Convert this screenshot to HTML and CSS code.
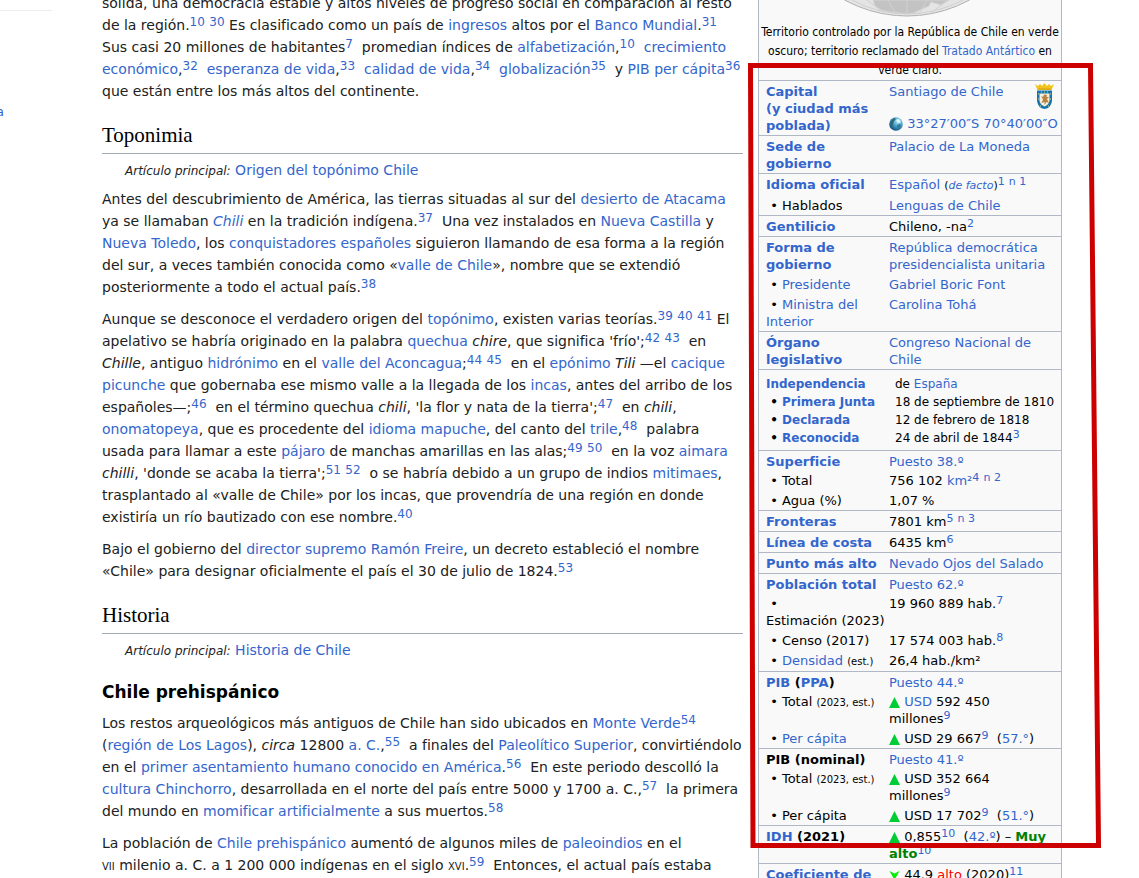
FILE: index.html
```html
<!DOCTYPE html>
<html lang="es">
<head>
<meta charset="utf-8">
<title>Chile</title>
<link rel="stylesheet" href="styles.css">
</head>
<body>
<svg class="defs" aria-hidden="true">
  <symbol id="up" viewBox="0 0 11 11"><path d="M5.500 0 11 11H0z" fill="#00cc33"/></symbol>
  <symbol id="down" viewBox="0 0 11 11"><path d="M0.500 1 5.500 3.500 10.500 1 5.500 10z" fill="#00f000"/></symbol>
</svg>
<div class="page">
  <aside class="sidebar">
    <nav class="portal"><a href="#">a</a></nav>
  </aside>
  <main class="content">
    <article class="article">
      <p>sólida, una democracia estable y altos niveles de progreso social en comparación al resto de la región.<sup><a href="#">10</a></sup> <sup><a href="#">30</a></sup> Es clasificado como un país de <a href="#">ingresos</a> altos por el <a href="#">Banco Mundial</a>.<sup><a href="#">31</a></sup>&nbsp; Sus casi 20 millones de habitantes<sup><a href="#">7</a></sup>&nbsp; promedian índices de <a href="#">alfabetización</a>,<sup><a href="#">10</a></sup>&nbsp; <a href="#">crecimiento económico</a>,<sup><a href="#">32</a></sup>&nbsp; <a href="#">esperanza de vida</a>,<sup><a href="#">33</a></sup>&nbsp; <a href="#">calidad de vida</a>,<sup><a href="#">34</a></sup>&nbsp; <a href="#">globalización</a><sup><a href="#">35</a></sup>&nbsp; y <a href="#">PIB per cápita</a><sup><a href="#">36</a></sup> que están entre los más altos del continente.</p>

      <h2>Toponimia</h2>
      <div class="hatnote"><i>Artículo principal:</i> <a href="#">Origen del topónimo Chile</a></div>
      <p>Antes del descubrimiento de América, las tierras situadas al sur del <a href="#">desierto de Atacama</a> ya se llamaban <a href="#"><i>Chili</i></a> en la tradición indígena.<sup><a href="#">37</a></sup>&nbsp; Una vez instalados en <a href="#">Nueva Castilla</a> y <a href="#">Nueva Toledo</a>, los <a href="#">conquistadores españoles</a> siguieron llamando de esa forma a la región del sur, a veces también conocida como «<a href="#">valle de Chile</a>», nombre que se extendió posteriormente a todo el actual país.<sup><a href="#">38</a></sup></p>
      <p>Aunque se desconoce el verdadero origen del <a href="#">topónimo</a>, existen varias teorías.<sup><a href="#">39</a></sup> <sup><a href="#">40</a></sup> <sup><a href="#">41</a></sup> El apelativo se habría originado en la palabra <a href="#">quechua</a> <i>chire</i>, que significa 'frío';<sup><a href="#">42</a></sup> <sup><a href="#">43</a></sup>&nbsp; en <i>Chille</i>, antiguo <a href="#">hidrónimo</a> en el <a href="#">valle del Aconcagua</a>;<sup><a href="#">44</a></sup> <sup><a href="#">45</a></sup>&nbsp; en el <a href="#">epónimo</a> <i>Tili</i> —el <a href="#">cacique</a> <a href="#">picunche</a> que gobernaba ese mismo valle a la llegada de los <a href="#">incas</a>, antes del arribo de los españoles—;<sup><a href="#">46</a></sup>&nbsp; en el término quechua <i>chili</i>, 'la flor y nata de la tierra';<sup><a href="#">47</a></sup>&nbsp; en <i>chili</i>, <a href="#">onomatopeya</a>, que es procedente del <a href="#">idioma mapuche</a>, del canto del <a href="#">trile</a>,<sup><a href="#">48</a></sup>&nbsp; palabra usada para llamar a este <a href="#">pájaro</a> de manchas amarillas en las alas;<sup><a href="#">49</a></sup> <sup><a href="#">50</a></sup>&nbsp; en la voz <a href="#">aimara</a> <i>chilli</i>, 'donde se acaba la tierra';<sup><a href="#">51</a></sup> <sup><a href="#">52</a></sup>&nbsp; o se habría debido a un grupo de indios <a href="#">mitimaes</a>, trasplantado al «valle de Chile» por los incas, que provendría de una región en donde existiría un río bautizado con ese nombre.<sup><a href="#">40</a></sup></p>
      <p>Bajo el gobierno del <a href="#">director supremo</a> <a href="#">Ramón Freire</a>, un decreto estableció el nombre «Chile» para designar oficialmente el país el 30 de julio de 1824.<sup><a href="#">53</a></sup></p>

      <h2>Historia</h2>
      <div class="hatnote"><i>Artículo principal:</i> <a href="#">Historia de Chile</a></div>
      <h3>Chile prehispánico</h3>
      <p>Los restos arqueológicos más antiguos de Chile han sido ubicados en <a href="#">Monte Verde</a><sup><a href="#">54</a></sup>&nbsp; (<a href="#">región de Los Lagos</a>), <i>circa</i> 12800 <a href="#">a.&nbsp;C.</a>,<sup><a href="#">55</a></sup>&nbsp; a finales del <a href="#">Paleolítico Superior</a>, convirtiéndolo en el <a href="#">primer asentamiento humano conocido en América</a>.<sup><a href="#">56</a></sup>&nbsp; En este periodo descolló la <a href="#">cultura Chinchorro</a>, desarrollada en el norte del país entre 5000 y 1700 a.&nbsp;C.,<sup><a href="#">57</a></sup>&nbsp; la primera del mundo en <a href="#">momificar artificialmente</a> a sus muertos.<sup><a href="#">58</a></sup></p>
      <p>La población de <a href="#">Chile prehispánico</a> aumentó de algunos miles de <a href="#">paleoindios</a> en el <span class="century">vii</span>&nbsp;milenio a.&nbsp;C. a 1&nbsp;200&nbsp;000 indígenas en el siglo <span class="century">xvi</span>.<sup><a href="#">59</a></sup>&nbsp; Entonces, el actual país estaba</p>
    </article>

    <section class="infobox" aria-label="Ficha de Chile">
      <figure>
        <svg class="map" viewBox="0 0 128 17" role="img" aria-label="Mapa">
          <defs><clipPath id="disc"><circle cx="64" cy="-113.500" r="130"/></clipPath></defs>
          <circle cx="64" cy="-113.500" r="129.500" fill="#e4e4e4" stroke="#b0b0b0"/>
          <g clip-path="url(#disc)">
            <path d="M30 0 32 6 38 10 46 12 56 13 63 14 71 13 77 10 86 6 88 2 98 5 106 0z" fill="#c3c3c3" stroke="#d4d4d4"/>
            <path d="M9 0Q35 14 64 14T120 0M64 0v17M45 0l9 16M84 0l-9 16M24 0l20 15M105 0 85 15" fill="none" stroke="#d0d0d0"/>
          </g>
        </svg>
        <figcaption>Territorio controlado por la República de Chile en verde oscuro; territorio reclamado del <a href="#">Tratado Antártico</a> en verde claro.</figcaption>
      </figure>
      <table>
        <tbody>
          <tr class="first"><th scope="row"><a href="#">Capital<br>(y ciudad más poblada)</a></th>
            <td>
              <svg class="coat" viewBox="0 0 21 26" role="img" aria-label="Escudo">
                <path d="M1 1 4 3 6 1 8 3 10.500 0 13 3 15 1 17 3 20 1 17.500 7H3.500z" fill="#f0c41c"/>
                <path d="M4 6h13" stroke="#d09a18"/>
                <path d="M3 7.500h15V18q-1 7-7.500 8Q4 25 3 18z" fill="#1474ae"/>
                <path d="M5.500 10.500h10V18q-1 4-5 5.500Q6.500 22 5.500 18z" fill="#f5eedc"/>
                <path d="M7 13l2 1 1-2.500 3 .5-.5 2 2.500 0-2 2 2 4-2.500-1-2 3v-3l-3 1 1.500-3.500z" fill="#b98345"/>
                <path d="M4 11h1M16 11h1M4 16h1M16 16h1M6 23h1M14 23h1M7 9h1M10 9h1M13 9h1" stroke="#e9d47b"/>
              </svg>
              <a href="#">Santiago de Chile</a>
              <div class="coords">
                <svg class="globe" viewBox="0 0 14 14" aria-hidden="true">
                  <defs><radialGradient id="sea" cx=".65" cy=".3" r=".8"><stop offset="0" stop-color="#bdeaf6"/><stop offset=".45" stop-color="#4aa3cd"/><stop offset="1" stop-color="#093f70"/></radialGradient></defs>
                  <circle cx="7" cy="7" r="6.800" fill="url(#sea)"/>
                  <path d="M2 4 5 1 7 2 5 4 4 7 4 9 3 10 1 7z" fill="#2c6a78"/>
                  <path d="M8 8l3-1 1 2-2 2-1 1-1-2z" fill="#2f7d96"/>
                  <path d="M7 3l3-1 2 3-3 1z" fill="#e0f7fb"/>
                </svg>
                <a href="#">33°27′00″S 70°40′00″O</a>
              </div>
            </td></tr>
          <tr class="first"><th scope="row"><a href="#">Sede de gobierno</a></th><td><a href="#">Palacio de La Moneda</a></td></tr>
          <tr class="first"><th scope="row"><a href="#">Idioma oficial</a></th><td><a href="#">Español</a> <small>(<a href="#"><i>de facto</i></a>)</small><sup><a href="#">1</a></sup> <sup><a href="#">n 1</a></sup></td></tr>
          <tr class="sub"><th scope="row">&nbsp;•&nbsp;Hablados</th><td><a href="#">Lenguas de Chile</a></td></tr>
          <tr class="first"><th scope="row"><a href="#">Gentilicio</a></th><td>Chileno, -na<sup><a href="#">2</a></sup></td></tr>
          <tr class="first"><th scope="row"><a href="#">Forma de gobierno</a></th><td><a href="#">República democrática presidencialista unitaria</a></td></tr>
          <tr class="sub"><th scope="row">&nbsp;•&nbsp;<a href="#">Presidente</a></th><td><a href="#">Gabriel Boric Font</a></td></tr>
          <tr class="sub"><th scope="row">&nbsp;•&nbsp;<a href="#">Ministra del Interior</a></th><td><a href="#">Carolina Tohá</a></td></tr>
          <tr class="first"><th scope="row"><a href="#">Órgano legislativo</a></th><td><a href="#">Congreso Nacional de Chile</a></td></tr>
          <tr class="first dates opening"><th scope="row"><a href="#">Independencia</a></th><td>de <a href="#">España</a></td></tr>
          <tr class="dates"><th scope="row">&nbsp;•&nbsp;<a href="#">Primera Junta</a></th><td>18 de septiembre de 1810</td></tr>
          <tr class="dates"><th scope="row">&nbsp;•&nbsp;<a href="#">Declarada</a></th><td>12 de febrero de 1818</td></tr>
          <tr class="dates closing"><th scope="row">&nbsp;•&nbsp;<a href="#">Reconocida</a></th><td>24 de abril de 1844<sup><a href="#">3</a></sup></td></tr>
          <tr class="first ranked"><th scope="row"><a href="#">Superficie</a></th><td><a href="#">Puesto 38.º</a></td></tr>
          <tr class="sub"><th scope="row">&nbsp;•&nbsp;Total</th><td>756&nbsp;102 <a href="#">km²</a><sup><a href="#">4</a></sup> <sup><a href="#">n 2</a></sup></td></tr>
          <tr class="sub"><th scope="row">&nbsp;•&nbsp;Agua (%)</th><td>1,07&nbsp;%</td></tr>
          <tr class="first"><th scope="row"><a href="#">Fronteras</a></th><td>7801&nbsp;km<sup><a href="#">5</a></sup> <sup><a href="#">n 3</a></sup></td></tr>
          <tr class="first"><th scope="row"><a href="#">Línea de costa</a></th><td>6435&nbsp;km<sup><a href="#">6</a></sup></td></tr>
          <tr class="first"><th scope="row"><a href="#">Punto más alto</a></th><td><a href="#">Nevado Ojos del Salado</a></td></tr>
          <tr class="first ranked"><th scope="row"><a href="#">Población total</a></th><td><a href="#">Puesto 62.º</a></td></tr>
          <tr class="sub"><th scope="row">&nbsp;• Estimación&nbsp;(2023)</th><td>19&nbsp;960&nbsp;889&nbsp;hab.<sup><a href="#">7</a></sup></td></tr>
          <tr class="sub"><th scope="row">&nbsp;•&nbsp;Censo (2017)</th><td>17&nbsp;574&nbsp;003&nbsp;hab.<sup><a href="#">8</a></sup></td></tr>
          <tr class="sub"><th scope="row">&nbsp;•&nbsp;<a href="#">Densidad</a> <small>(est.)</small></th><td>26,4&nbsp;hab./km²</td></tr>
          <tr class="first ranked"><th scope="row"><a href="#">PIB</a> (<a href="#">PPA</a>)</th><td><a href="#">Puesto 44.º</a></td></tr>
          <tr class="sub"><th scope="row">&nbsp;•&nbsp;Total <small>(2023, est.)</small></th><td><svg class="trend"><use href="#up"/></svg> <a href="#">USD</a> 592&nbsp;450<br>millones<sup><a href="#">9</a></sup></td></tr>
          <tr class="sub"><th scope="row">&nbsp;•&nbsp;<a href="#">Per cápita</a></th><td><svg class="trend"><use href="#up"/></svg> USD 29&nbsp;667<sup><a href="#">9</a></sup>&nbsp; (<a href="#">57.°</a>)</td></tr>
          <tr class="first ranked"><th scope="row">PIB (nominal)</th><td><a href="#">Puesto 41.º</a></td></tr>
          <tr class="sub"><th scope="row">&nbsp;•&nbsp;Total <small>(2023, est.)</small></th><td><svg class="trend"><use href="#up"/></svg> USD 352&nbsp;664<br>millones<sup><a href="#">9</a></sup></td></tr>
          <tr class="sub"><th scope="row">&nbsp;•&nbsp;Per cápita</th><td><svg class="trend"><use href="#up"/></svg> USD 17&nbsp;702<sup><a href="#">9</a></sup>&nbsp; (<a href="#">51.°</a>)</td></tr>
          <tr class="first"><th scope="row"><a href="#">IDH</a> (2021)</th><td><svg class="trend"><use href="#up"/></svg> 0,855<sup><a href="#">10</a></sup>&nbsp; (<a href="#">42.º</a>) – <b class="good">Muy alto</b><sup><a href="#">10</a></sup></td></tr>
          <tr class="first"><th scope="row"><a href="#">Coeficiente de Gini</a></th><td><svg class="trend"><use href="#down"/></svg> 44.9 <span class="high">alto</span> (2020)<sup><a href="#">11</a></sup></td></tr>
        </tbody>
      </table>
      <svg class="highlight" viewBox="0 0 353 785" aria-hidden="true"><path d="M2.500 2.500H342.500L350.500 782.500H5z" fill="none" stroke="#cc0000" stroke-width="5"/></svg>
    </section>
  </main>
</div>
</body>
</html>
```

FILE: styles.css
```css
* { box-sizing: border-box; }

body {
  margin: 0;
  background: #fff;
  color: #202122;
  font: 14px/22px "DejaVu Sans", sans-serif;
}

a { color: #3366cc; text-decoration: none; }

.defs { display: none; }

.page {
  display: flex;
  height: 100vh;
  overflow: hidden;
}

.sidebar { flex: 0 0 102px; padding-top: 10px; }

.portal {
  width: 52px;
  padding-top: 90px;
  border-top: 1px solid #eaecf0;
  font-size: 13px;
}

.portal a { margin-left: -4px; }

.content {
  flex: 1;
  display: flex;
  align-items: flex-start;
  gap: 15px;
  padding-right: 77px;
}

.article { flex: 1; margin-top: -8px; }

p { margin: 0 0 10px; }

h2, h3 { margin: 0; color: #000; }

h2 {
  margin: 22px 0 5px;
  padding-bottom: 6px;
  border-bottom: 1px solid #a2a9b1;
  font: 21px/23px "Liberation Serif", serif;
}

h3 {
  margin: 17px 0 6px;
  font-size: 17px;
  line-height: 27px;
}

sup {
  font-size: 12px;
  line-height: 0;
  vertical-align: 4px;
}

.hatnote { margin-bottom: 6px; padding-left: 23px; }
.hatnote i { font-size: 12px; }

.century { font-variant: small-caps; }

.infobox {
  position: relative;
  flex: 0 0 304px;
  border: solid #b0b8c6;
  border-width: 0 1px 1px;
  background: #f9f9f9;
  color: #000;
}

figure { margin: 0; }

.map {
  display: block;
  width: 128px;
  height: 17px;
  margin: 0 auto 6px 84px;
}

figcaption {
  padding: 0 1px;
  font-family: "DejaVu Sans Condensed", "DejaVu Sans", sans-serif;
  font-size: 12px;
  line-height: 19px;
  text-align: center;
}

table {
  width: 100%;
  border-collapse: separate;
  border-spacing: 0;
  table-layout: fixed;
  font-size: 13px;
  line-height: 17px;
}

th, td {
  padding: 2px 2px 1px 0;
  text-align: left;
  vertical-align: top;
}

th { width: 130px; padding-left: 7px; }

.first > * { border-top: 1px solid #b0b8c6; }
.ranked > * { padding-bottom: 0; }
.sub th { font-weight: normal; }

.dates { font-size: 12px; line-height: 18px; }
.dates > * { padding-top: 0; padding-bottom: 0; }
.dates td { padding-left: 6px; }
.opening > * { padding-top: 5px; }
.closing > * { padding-bottom: 3px; }

small, td sup { font-size: 11px; }

th small { font-size: 10px; }

.coat { float: right; width: 21px; height: 26px; margin-right: 4px; }

.coords { margin-top: 15px; white-space: nowrap; }
.globe { width: 14px; height: 14px; vertical-align: -3px; }

.trend { width: 11px; height: 11px; vertical-align: -2px; }

.good { color: #008000; }
.high { color: #ff0000; }

.highlight {
  position: absolute;
  top: 63px;
  left: -11px;
  width: 353px;
  height: 785px;
}
```
